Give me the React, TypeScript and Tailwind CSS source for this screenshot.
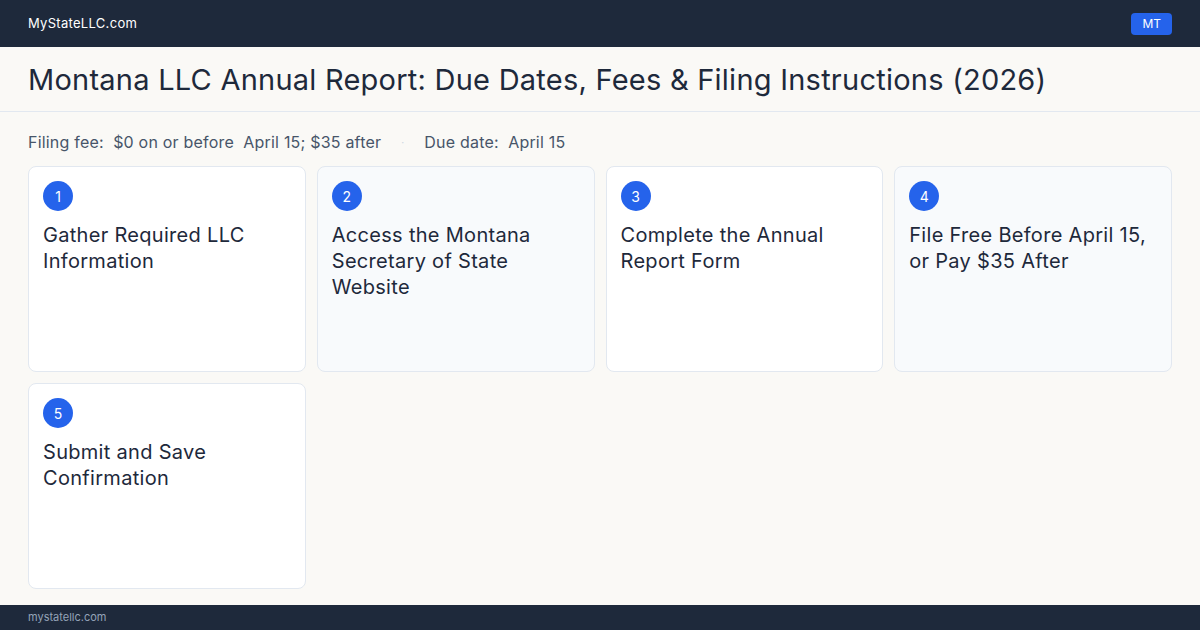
const steps = [
  'Gather Required LLC Information',
  'Access the Montana Secretary of State Website',
  'Complete the Annual Report Form',
  'File Free Before April 15, or Pay $35 After',
  'Submit and Save Confirmation',
]

const App = () => {
  return (
    <div className="w-[1200px] h-[630px] flex flex-col bg-[#faf9f6] text-[#1e293b] overflow-hidden" style={{ fontFamily: 'Inter, "Noto Sans", sans-serif' }}>
      <div className="h-[47px] shrink-0 bg-[#1e293b] flex flex-row items-center justify-between px-7">
        <p className="text-[13px] text-white tracking-[0.3px]">MyStateLLC.com</p>
        <span className="bg-[#2563eb] text-white text-[12px] rounded px-[11px] h-[22px] flex items-center">MT</span>
      </div>

      <div className="h-[65px] shrink-0 border-b border-[#e2e8f0] flex items-center px-7">
        <h1 className="text-[29px] font-normal text-[#1e293b] tracking-[0.24px] pt-[2px]">Montana LLC Annual Report: Due Dates, Fees &amp; Filing Instructions (2026)</h1>
      </div>

      <div className="flex-1 px-7 pt-[19px]">
        <div className="flex flex-row items-center text-[16px] text-[#475569] h-[22px] tracking-[0.2px]">
          <span>Filing fee:&nbsp; $0 on or before&nbsp; April 15; $35 after</span>
          <span className="mx-[20px] text-[#cbd5e1] text-[10px]">·</span>
          <span>Due date:&nbsp; April 15</span>
        </div>

        <div className="grid grid-cols-4 gap-[11px] mt-[13px]">
          {steps.map((s, i) => (
            <div key={i} className={`h-[206px] rounded-lg border border-[#e2e8f0] p-[14px] ${i % 2 === 1 ? 'bg-[#f8fafc]' : 'bg-white'}`}>
              <div className="w-[30px] h-[30px] rounded-full bg-[#2563eb] text-white text-[14px] flex items-center justify-center">{i + 1}</div>
              <h2 className="mt-[11px] text-[20px] leading-[26px] text-[#1e293b] tracking-[0.3px]">{s}</h2>
            </div>
          ))}
        </div>
      </div>

      <div className="h-[25px] shrink-0 bg-[#1e293b] flex items-center px-7">
        <p className="text-[11px] text-[#94a3b8]">mystatellc.com</p>
      </div>
    </div>
  )
}

export default App
